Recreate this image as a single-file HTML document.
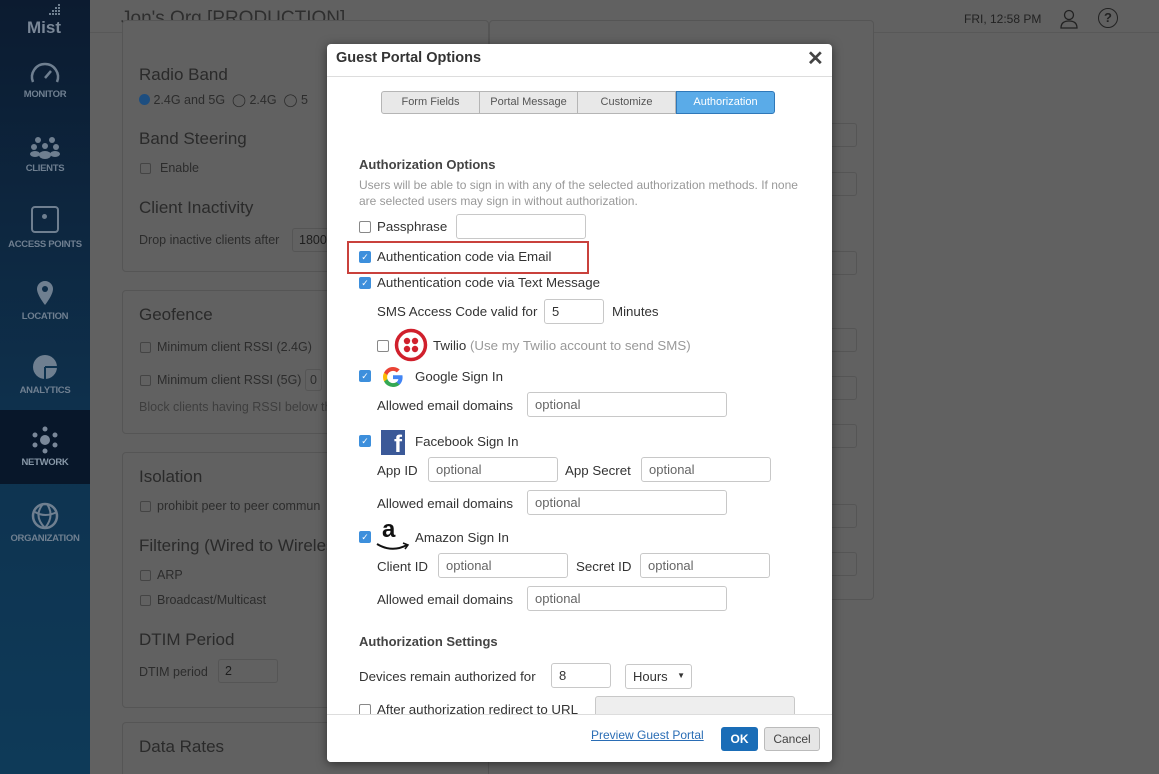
<!DOCTYPE html><html style="background:#616161;width:1159px;height:774px;overflow:hidden"><head><style>
*{box-sizing:border-box;margin:0;padding:0}
body{width:1159px;height:774px;overflow:hidden;background:#616161;font-family:"Liberation Sans",sans-serif;position:relative;color:#1e1e1e}
.a{position:absolute}
.side{left:0;top:0;width:90px;height:774px;background:linear-gradient(#0c1b30,#0e3350 60%,#0e3a58)}
.nav{width:90px;text-align:center;color:#6f7f90;font-size:9.5px;font-weight:bold;letter-spacing:-.3px}
.pan{border:1px solid #555;border-radius:4px;background:#616161}
.t{font-size:14px;color:#2c2c2c}
.h{font-size:17px;color:#2a2a2a}
.cb{width:11px;height:11px;border:1px solid #444;border-radius:2px}
.inp{border:1px solid #555;border-radius:3px;height:24px}
.m{left:327px;top:44px;width:505px;height:718px;background:#fff;border-radius:4px;box-shadow:0 2px 10px rgba(0,0,0,.5);overflow:hidden}
.m .t2{font-size:13.3px;color:#333}
.mi{border:1px solid #c8c8c8;border-radius:3px;height:25px;font-size:13px;color:#666;padding:4px 7px}
.ck{width:12px;height:12px;border-radius:2px;background:#3d8fdc;color:#fff;font-size:9px;line-height:12px;text-align:center}
.uc{width:12px;height:12px;border:1px solid #888;border-radius:2px;background:#fff}
.tab{top:47px;height:23px;border:1px solid #b5b5b5;background:#e8e8e8;font-size:11px;color:#555;text-align:center;line-height:21px}
</style></head><body>
<div class="a side"></div>
<div class="a" style="left:27px;top:18px;color:#7a8797;font-weight:bold;font-size:17px">Mist</div>
<svg class="a" style="left:48px;top:4px" width="14" height="14"><g fill="#6f7f90"><rect x="10" y="0" width="2" height="2"/><rect x="7" y="3" width="2" height="2"/><rect x="10" y="3" width="2" height="2"/><rect x="4" y="6" width="2" height="2"/><rect x="7" y="6" width="2" height="2"/><rect x="10" y="6" width="2" height="2"/><rect x="1" y="9" width="2" height="2"/><rect x="4" y="9" width="2" height="2"/><rect x="7" y="9" width="2" height="2"/><rect x="10" y="9" width="2" height="2"/></g></svg>
<div class="a nav" style="top:58px"><svg width="34" height="28" viewBox="0 0 34 28"><path d="M5 24A13 13 0 1 1 29 24" fill="none" stroke="#6f7f90" stroke-width="2.5"/><path d="M17 20L23 13" stroke="#6f7f90" stroke-width="2.5"/></svg><br>MONITOR</div>
<div class="a nav" style="top:134px"><svg width="34" height="26"><g fill="#6f7f90"><circle cx="10" cy="6" r="3"/><circle cx="24" cy="6" r="3"/><circle cx="6" cy="13" r="3"/><circle cx="28" cy="13" r="3"/><circle cx="17" cy="12" r="3"/><ellipse cx="17" cy="21" rx="6" ry="4"/><ellipse cx="7" cy="20" rx="5" ry="3"/><ellipse cx="27" cy="20" rx="5" ry="3"/></g></svg><br>CLIENTS</div>
<div class="a nav" style="top:204px"><div style="width:28px;height:27px;border:2.5px solid #6f7f90;border-radius:4px;margin:2px auto 6px;position:relative"><div style="position:absolute;left:9px;top:6px;width:5px;height:5px;border-radius:50%;background:#6f7f90"></div></div>ACCESS POINTS</div>
<div class="a nav" style="top:280px"><svg width="20" height="28"><path d="M10 1A8 8 0 0 1 18 9C18 15 10 25 10 25C10 25 2 15 2 9A8 8 0 0 1 10 1Z" fill="#6f7f90"/><circle cx="10" cy="9" r="3" fill="#0e2d48"/></svg><br>LOCATION</div>
<div class="a nav" style="top:354px"><svg width="26" height="28"><circle cx="13" cy="13" r="12" fill="#6f7f90"/><path d="M13 13H25M13 13V25" stroke="#0e3350" stroke-width="2"/></svg><br>ANALYTICS</div>
<div class="a" style="left:0;top:410px;width:90px;height:74px;background:#08172a"></div>
<div class="a nav" style="top:426px"><svg width="28" height="28"><g fill="#7a8899"><circle cx="14" cy="14" r="5"/><circle cx="14" cy="3" r="2.5"/><circle cx="14" cy="25" r="2.5"/><circle cx="4" cy="9" r="2.5"/><circle cx="24" cy="9" r="2.5"/><circle cx="4" cy="19" r="2.5"/><circle cx="24" cy="19" r="2.5"/></g></svg><br><span style="color:#8898a8">NETWORK</span></div>
<div class="a nav" style="top:502px"><svg width="28" height="28"><circle cx="14" cy="14" r="12" fill="none" stroke="#6f7f90" stroke-width="2.5"/><path d="M4 10Q14 16 26 10M12 2Q2 14 14 26M16 2Q24 14 14 26" fill="none" stroke="#6f7f90" stroke-width="2"/></svg><br>ORGANIZATION</div>

<div class="a" style="left:121px;top:8px;font-size:19px;color:#2e2e2e">Jon's Org [PRODUCTION]</div>
<div class="a" style="left:964px;top:12px;font-size:12px;color:#222">FRI, 12:58 PM</div>
<svg class="a" style="left:1059px;top:9px" width="20" height="20"><circle cx="10" cy="6" r="4.5" fill="none" stroke="#222" stroke-width="1.3"/><path d="M2 19Q2 12 10 12Q18 12 18 19Z" fill="none" stroke="#222" stroke-width="1.3"/></svg>
<div class="a" style="left:1098px;top:8px;width:20px;height:20px;border:1.6px solid #222;border-radius:50%;font-size:13px;font-weight:bold;text-align:center;line-height:17px;color:#222">?</div>
<div class="a" style="left:90px;top:32px;width:1069px;height:1px;background:#585858"></div>

<div class="a pan" style="left:122px;top:20px;width:367px;height:252px"></div>
<div class="a h" style="left:139px;top:65px">Radio Band</div>
<div class="a t" style="left:139px;top:92px;font-size:12.5px"><span style="display:inline-block;width:11px;height:11px;border-radius:50%;background:#1d4e80;vertical-align:-1px"></span> 2.4G and 5G &nbsp;◯ 2.4G &nbsp;◯ 5</div>
<div class="a h" style="left:139px;top:129px">Band Steering</div>
<div class="a cb" style="left:140px;top:163px"></div><div class="a t" style="left:160px;top:161px;font-size:12.5px">Enable</div>
<div class="a h" style="left:139px;top:198px">Client Inactivity</div>
<div class="a t" style="left:139px;top:233px;font-size:12.5px">Drop inactive clients after</div>
<div class="a inp" style="left:292px;top:228px;width:60px;font-size:12.5px;padding:4px 6px">1800</div>

<div class="a pan" style="left:122px;top:290px;width:367px;height:144px"></div>
<div class="a h" style="left:139px;top:305px">Geofence</div>
<div class="a cb" style="left:140px;top:342px"></div><div class="a t" style="left:157px;top:340px;font-size:12.5px">Minimum client RSSI (2.4G)</div>
<div class="a cb" style="left:140px;top:375px"></div><div class="a t" style="left:157px;top:373px;font-size:12.5px">Minimum client RSSI (5G) <span style="border:1px solid #555;padding:3px 4px;border-radius:3px">0</span></div>
<div class="a t" style="left:139px;top:400px;font-size:12.5px;color:#3e3e3e">Block clients having RSSI below th</div>

<div class="a pan" style="left:122px;top:452px;width:367px;height:256px"></div>
<div class="a h" style="left:139px;top:467px">Isolation</div>
<div class="a cb" style="left:140px;top:501px"></div><div class="a t" style="left:157px;top:499px;font-size:12.5px">prohibit peer to peer commun</div>
<div class="a h" style="left:139px;top:536px">Filtering (Wired to Wireles</div>
<div class="a cb" style="left:140px;top:570px"></div><div class="a t" style="left:157px;top:568px;font-size:12.5px">ARP</div>
<div class="a cb" style="left:140px;top:595px"></div><div class="a t" style="left:157px;top:593px;font-size:12.5px">Broadcast/Multicast</div>
<div class="a h" style="left:139px;top:630px">DTIM Period</div>
<div class="a t" style="left:139px;top:665px;font-size:12.5px">DTIM period</div>
<div class="a inp" style="left:218px;top:659px;width:60px;font-size:12.5px;padding:4px 6px">2</div>
<div class="a pan" style="left:122px;top:722px;width:367px;height:52px;border-bottom:none;border-radius:4px 4px 0 0"></div>
<div class="a h" style="left:139px;top:737px">Data Rates</div>

<div class="a pan" style="left:489px;top:20px;width:385px;height:580px"></div>
<div class="a inp" style="left:820px;top:123px;width:37px;height:24px"></div>
<div class="a inp" style="left:820px;top:172px;width:37px"></div>
<div class="a inp" style="left:820px;top:251px;width:37px"></div>
<div class="a inp" style="left:820px;top:328px;width:37px"></div>
<div class="a inp" style="left:820px;top:376px;width:37px"></div>
<div class="a inp" style="left:820px;top:424px;width:37px"></div>
<div class="a inp" style="left:820px;top:504px;width:37px"></div>
<div class="a inp" style="left:820px;top:552px;width:37px"></div>

<div class="a m">
<div class="a" style="left:9px;top:6px;font-size:14.5px;font-weight:bold;color:#333">Guest Portal Options</div>
<div class="a" style="left:480px;top:2px;font-size:20px;font-weight:bold;color:#444">✕</div>
<div class="a" style="left:0;top:32px;width:505px;height:1px;background:#ddd"></div>
<div class="a tab" style="left:54px;width:99px;border-radius:3px 0 0 3px">Form Fields</div>
<div class="a tab" style="left:152px;width:99px">Portal Message</div>
<div class="a tab" style="left:250px;width:99px">Customize</div>
<div class="a tab" style="left:349px;width:99px;background:#5aabe8;border-color:#2f78b8;color:#fff;border-radius:0 3px 3px 0">Authorization</div>

<div class="a" style="left:32px;top:113px;font-size:13px;font-weight:bold;color:#444">Authorization Options</div>
<div class="a" style="left:32px;top:133px;font-size:12px;color:#999;line-height:16px;width:440px">Users will be able to sign in with any of the selected authorization methods. If none are selected users may sign in without authorization.</div>
<div class="a uc" style="left:32px;top:177px"></div><div class="a t2" style="left:50px;top:175px">Passphrase</div>
<div class="a mi" style="left:129px;top:170px;width:130px"></div>
<div class="a" style="left:20px;top:197px;width:242px;height:33px;border:2px solid #c9413c"></div>
<div class="a ck" style="left:32px;top:207px">✓</div><div class="a t2" style="left:50px;top:205px">Authentication code via Email</div>
<div class="a ck" style="left:32px;top:233px">✓</div><div class="a t2" style="left:50px;top:231px">Authentication code via Text Message</div>
<div class="a t2" style="left:50px;top:260px">SMS Access Code valid for</div>
<div class="a mi" style="left:217px;top:255px;width:60px;color:#333">5</div>
<div class="a t2" style="left:285px;top:260px">Minutes</div>
<div class="a uc" style="left:50px;top:296px"></div>
<svg class="a" style="left:67px;top:284px" width="34" height="34"><circle cx="17" cy="17" r="14.5" fill="none" stroke="#d0202c" stroke-width="3.5"/><g fill="#d0202c"><circle cx="13" cy="13" r="3.2"/><circle cx="21" cy="13" r="3.2"/><circle cx="13" cy="21" r="3.2"/><circle cx="21" cy="21" r="3.2"/></g></svg>
<div class="a t2" style="left:106px;top:294px">Twilio <span style="color:#999">(Use my Twilio account to send SMS)</span></div>

<div class="a ck" style="left:32px;top:326px">✓</div>
<svg class="a" style="left:54px;top:321px" width="24" height="24" viewBox="0 0 24 24"><path d="M21.6 12.2c0-.7-.1-1.4-.2-2H12v3.9h5.4a4.6 4.6 0 0 1-2 3v2.5h3.2c1.9-1.7 3-4.3 3-7.4z" fill="#4285f4"/><path d="M12 22c2.7 0 5-.9 6.6-2.4l-3.2-2.5c-.9.6-2 1-3.4 1-2.6 0-4.8-1.8-5.6-4.1H3.1v2.6A10 10 0 0 0 12 22z" fill="#34a853"/><path d="M6.4 14a6 6 0 0 1 0-3.9V7.5H3.1a10 10 0 0 0 0 9z" fill="#fbbc05"/><path d="M12 5.9c1.5 0 2.8.5 3.8 1.5l2.9-2.9A10 10 0 0 0 3.1 7.5l3.3 2.6C7.2 7.7 9.4 5.9 12 5.9z" fill="#ea4335"/></svg>
<div class="a t2" style="left:88px;top:325px">Google Sign In</div>
<div class="a t2" style="left:50px;top:354px">Allowed email domains</div>
<div class="a mi" style="left:200px;top:348px;width:200px">optional</div>

<div class="a ck" style="left:32px;top:391px">✓</div>
<div class="a" style="left:54px;top:386px;width:24px;height:25px;background:#3b5998;color:#fff;font-weight:bold;font-size:24px;text-align:right;padding-right:3px;line-height:30px;overflow:hidden">f</div>
<div class="a t2" style="left:88px;top:390px">Facebook Sign In</div>
<div class="a t2" style="left:50px;top:419px">App ID</div>
<div class="a mi" style="left:101px;top:413px;width:130px">optional</div>
<div class="a t2" style="left:238px;top:419px">App Secret</div>
<div class="a mi" style="left:314px;top:413px;width:130px">optional</div>
<div class="a t2" style="left:50px;top:452px">Allowed email domains</div>
<div class="a mi" style="left:200px;top:446px;width:200px">optional</div>

<div class="a ck" style="left:32px;top:487px">✓</div>
<div class="a" style="left:55px;top:472px;font-size:24px;font-weight:bold;color:#111">a</div>
<svg class="a" style="left:48px;top:497px" width="36" height="12"><path d="M2 3Q17 12 32 4" fill="none" stroke="#111" stroke-width="2"/><path d="M28 2L33 4L30 8" fill="none" stroke="#111" stroke-width="1.5"/></svg>
<div class="a t2" style="left:88px;top:486px">Amazon Sign In</div>
<div class="a t2" style="left:50px;top:515px">Client ID</div>
<div class="a mi" style="left:111px;top:509px;width:130px">optional</div>
<div class="a t2" style="left:249px;top:515px">Secret ID</div>
<div class="a mi" style="left:313px;top:509px;width:130px">optional</div>
<div class="a t2" style="left:50px;top:548px">Allowed email domains</div>
<div class="a mi" style="left:200px;top:542px;width:200px">optional</div>

<div class="a" style="left:32px;top:590px;font-size:13px;font-weight:bold;color:#444">Authorization Settings</div>
<div class="a t2" style="left:32px;top:625px">Devices remain authorized for</div>
<div class="a mi" style="left:224px;top:619px;width:60px;color:#333">8</div>
<div class="a mi" style="left:298px;top:620px;width:67px;color:#333;white-space:nowrap">Hours<span style="position:absolute;right:6px;top:6px;font-size:8px">▼</span></div>
<div class="a uc" style="left:32px;top:660px"></div><div class="a t2" style="left:50px;top:658px">After authorization redirect to URL</div>
<div class="a mi" style="left:268px;top:652px;width:200px;background:#eee;height:18px;border-bottom:none;border-radius:3px 3px 0 0"></div>
<div class="a" style="left:0;top:670px;width:505px;height:48px;background:#fff;border-top:1px solid #ddd"></div>
<div class="a" style="left:264px;top:684px;font-size:12px;color:#2a6db5;text-decoration:underline">Preview Guest Portal</div>
<div class="a" style="left:394px;top:683px;width:37px;height:24px;background:#1a6db7;border-radius:3px;color:#fff;font-size:12px;font-weight:bold;text-align:center;line-height:24px">OK</div>
<div class="a" style="left:437px;top:683px;width:56px;height:24px;background:#e6e6e6;border:1px solid #bbb;border-radius:3px;color:#444;font-size:12px;text-align:center;line-height:22px">Cancel</div>
</div>
</body></html>
